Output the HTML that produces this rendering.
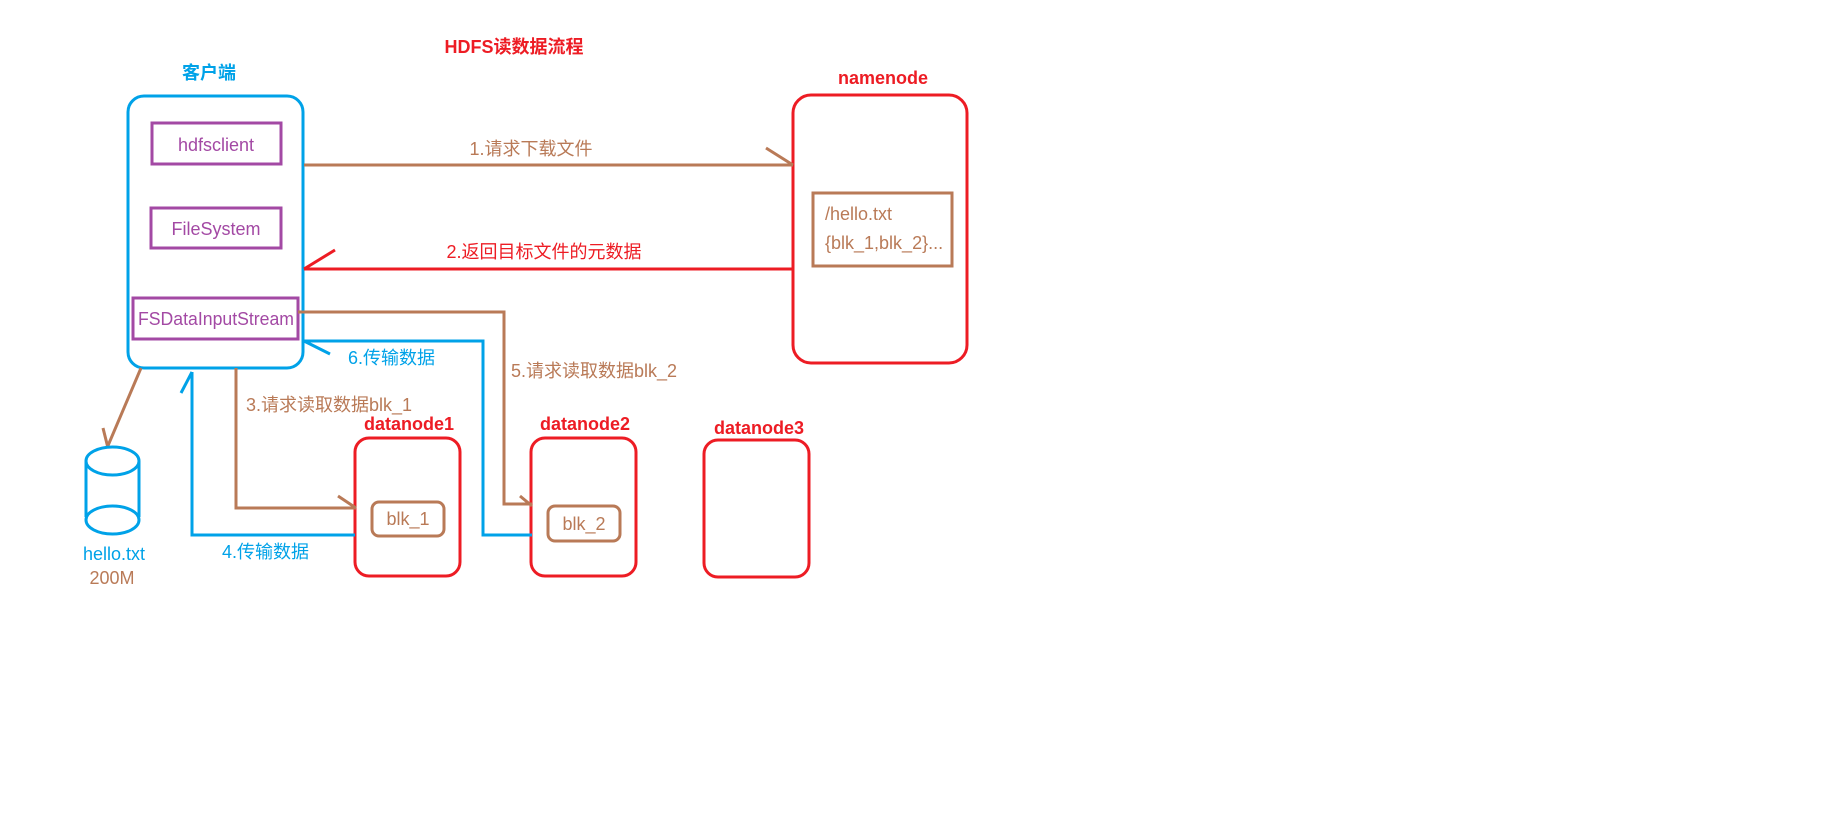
<!DOCTYPE html>
<html><head><meta charset="utf-8"><style>
html,body{margin:0;padding:0;background:#fff;}
svg{display:block;}
text{font-family:"Liberation Sans","Noto Sans CJK SC",sans-serif;font-size:18px;}
.b{font-weight:bold;}
</style></head><body>
<svg width="1831" height="817" viewBox="0 0 1831 817" xmlns="http://www.w3.org/2000/svg">
<rect width="1831" height="817" fill="#fff"/>
<g fill="none" stroke-width="3">
<rect x="128" y="96" width="175" height="272" rx="16" stroke="#00a2e8"/>
<rect x="152" y="123" width="129" height="41" stroke="#a349a4"/>
<rect x="151" y="208" width="130" height="40" stroke="#a349a4"/>
<rect x="133" y="298" width="165" height="41" stroke="#a349a4"/>
<rect x="793" y="95" width="174" height="268" rx="18" stroke="#ed1c24"/>
<rect x="813" y="193" width="139" height="73" stroke="#b97a57"/>
<rect x="355" y="438" width="105" height="138" rx="14" stroke="#ed1c24"/>
<rect x="531" y="438" width="105" height="138" rx="14" stroke="#ed1c24"/>
<rect x="704" y="440" width="105" height="137" rx="14" stroke="#ed1c24"/>
<rect x="372" y="502" width="72" height="34" rx="7" stroke="#b97a57"/>
<rect x="548" y="506" width="72" height="35" rx="7" stroke="#b97a57"/>
<path d="M304 165 H793 M766 148 L793 165" stroke="#b97a57"/>
<path d="M793 269 H304 M335 250 L304 269" stroke="#ed1c24"/>
<path d="M298 312 H504 V504 H532 M520 496 L532 506" stroke="#b97a57"/>
<path d="M532 535 H483 V341 H304 M330 354 L304 341" stroke="#00a2e8"/>
<path d="M236 368 V508 H356 M338 496 L356 508" stroke="#b97a57"/>
<path d="M355 535 H192 V372 M192 372 L181 393" stroke="#00a2e8"/>
<path d="M141 368 L107 448 M103 428 L108 448" stroke="#b97a57"/>
<path d="M86 461 V517 M139 461 V517" stroke="#00a2e8"/>
<ellipse cx="112.5" cy="461" rx="26.5" ry="14" stroke="#00a2e8"/>
<ellipse cx="112.5" cy="520" rx="26.5" ry="14" stroke="#00a2e8"/>
</g>
<text x="514" y="53" text-anchor="middle" class="b" fill="#ed1c24" font-size="19">HDFS读数据流程</text>
<text x="209" y="79" text-anchor="middle" class="b" fill="#00a2e8" font-size="17">客户端</text>
<text x="883" y="84" text-anchor="middle" class="b" fill="#ed1c24" font-size="18">namenode</text>
<text x="216" y="151" text-anchor="middle" fill="#a349a4">hdfsclient</text>
<text x="216" y="235" text-anchor="middle" fill="#a349a4">FileSystem</text>
<text x="216" y="325" text-anchor="middle" fill="#a349a4" font-size="17" textLength="156" lengthAdjust="spacingAndGlyphs">FSDataInputStream</text>
<text x="825" y="220" fill="#b97a57">/hello.txt</text>
<text x="825" y="249" fill="#b97a57">{blk_1,blk_2}...</text>
<text x="531" y="155" text-anchor="middle" fill="#b97a57" font-size="17">1.请求下载文件</text>
<text x="544" y="258" text-anchor="middle" fill="#ed1c24" font-size="17">2.返回目标文件的元数据</text>
<text x="511" y="377" fill="#b97a57" font-size="17">5.请求读取数据blk_2</text>
<text x="348" y="364" fill="#00a2e8" font-size="17">6.传输数据</text>
<text x="246" y="411" fill="#b97a57" font-size="17">3.请求读取数据blk_1</text>
<text x="222" y="558" fill="#00a2e8" font-size="17">4.传输数据</text>
<text x="409" y="430" text-anchor="middle" class="b" fill="#ed1c24">datanode1</text>
<text x="585" y="430" text-anchor="middle" class="b" fill="#ed1c24">datanode2</text>
<text x="759" y="434" text-anchor="middle" class="b" fill="#ed1c24">datanode3</text>
<text x="408" y="525" text-anchor="middle" fill="#b97a57">blk_1</text>
<text x="584" y="530" text-anchor="middle" fill="#b97a57">blk_2</text>
<text x="114" y="560" text-anchor="middle" fill="#00a2e8">hello.txt</text>
<text x="112" y="584" text-anchor="middle" fill="#b97a57">200M</text>
</svg>
</body></html>
